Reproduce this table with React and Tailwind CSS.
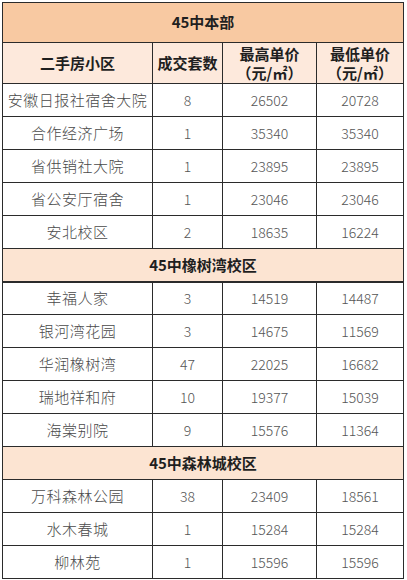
import React from 'react';

const sections = [
  {
    title: '45中本部',
    rows: [
      ['安徽日报社宿舍大院', '8', '26502', '20728'],
      ['合作经济广场', '1', '35340', '35340'],
      ['省供销社大院', '1', '23895', '23895'],
      ['省公安厅宿舍', '1', '23046', '23046'],
      ['安北校区', '2', '18635', '16224'],
    ],
  },
  {
    title: '45中橡树湾校区',
    rows: [
      ['幸福人家', '3', '14519', '14487'],
      ['银河湾花园', '3', '14675', '11569'],
      ['华润橡树湾', '47', '22025', '16682'],
      ['瑞地祥和府', '10', '19377', '15039'],
      ['海棠别院', '9', '15576', '11364'],
    ],
  },
  {
    title: '45中森林城校区',
    rows: [
      ['万科森林公园', '38', '23409', '18561'],
      ['水木春城', '1', '15284', '15284'],
      ['柳林苑', '1', '15596', '15596'],
    ],
  },
];

const font = { fontFamily: '"Noto Sans CJK SC", "Noto Sans", sans-serif' };

const cell = 'border border-[#2b2b2b] text-center align-middle p-0';

export default function App() {
  return (
    <div className="w-[407px] h-[580px] bg-white pt-[2px] pl-[2px]" style={font}>
      <table className="border-collapse w-[401px] table-fixed">
        <colgroup>
          <col className="w-[150px]" />
          <col className="w-[70px]" />
          <col className="w-[94px]" />
          <col className="w-[87px]" />
        </colgroup>
        <tbody>
          {sections.map((s, si) => (
            <React.Fragment key={s.title}>
              <tr className={si === 0 ? 'h-[40px]' : 'h-[33px]'}>
                <td
                  colSpan={4}
                  className={`${cell} font-bold text-[15px] text-[#1f1f1f] ${
                    si === 0 ? 'bg-[#f8c9a2]' : 'bg-[#fce4d2]'
                  } ${si === 1 ? 'border-b-2' : ''}`}
                >
                  {s.title}
                </td>
              </tr>
              {si === 0 && (
                <tr className="h-[41px] bg-[#fde9dc] font-bold text-[#1f1f1f]">
                  <td className={`${cell} text-[15px]`}>二手房小区</td>
                  <td className={`${cell} text-[15px]`}>成交套数</td>
                  <td className={`${cell} text-[15px] leading-[19px]`}>
                    <div>最高单价</div>
                    <div>（元/㎡）</div>
                  </td>
                  <td className={`${cell} text-[15px] leading-[19px]`}>
                    <div>最低单价</div>
                    <div>（元/㎡）</div>
                  </td>
                </tr>
              )}
              {s.rows.map((r) => (
                <tr key={r[0]} className="h-[33px] text-[#4a4a4a] font-light">
                  <td className={`${cell} text-[15px] tracking-[0.5px]`}>{r[0]}</td>
                  <td className={`${cell} text-[14px] text-[#555]`}>{r[1]}</td>
                  <td className={`${cell} text-[14px] text-[#555]`}>{r[2]}</td>
                  <td className={`${cell} text-[14px] text-[#555]`}>{r[3]}</td>
                </tr>
              ))}
            </React.Fragment>
          ))}
        </tbody>
      </table>
    </div>
  );
}
